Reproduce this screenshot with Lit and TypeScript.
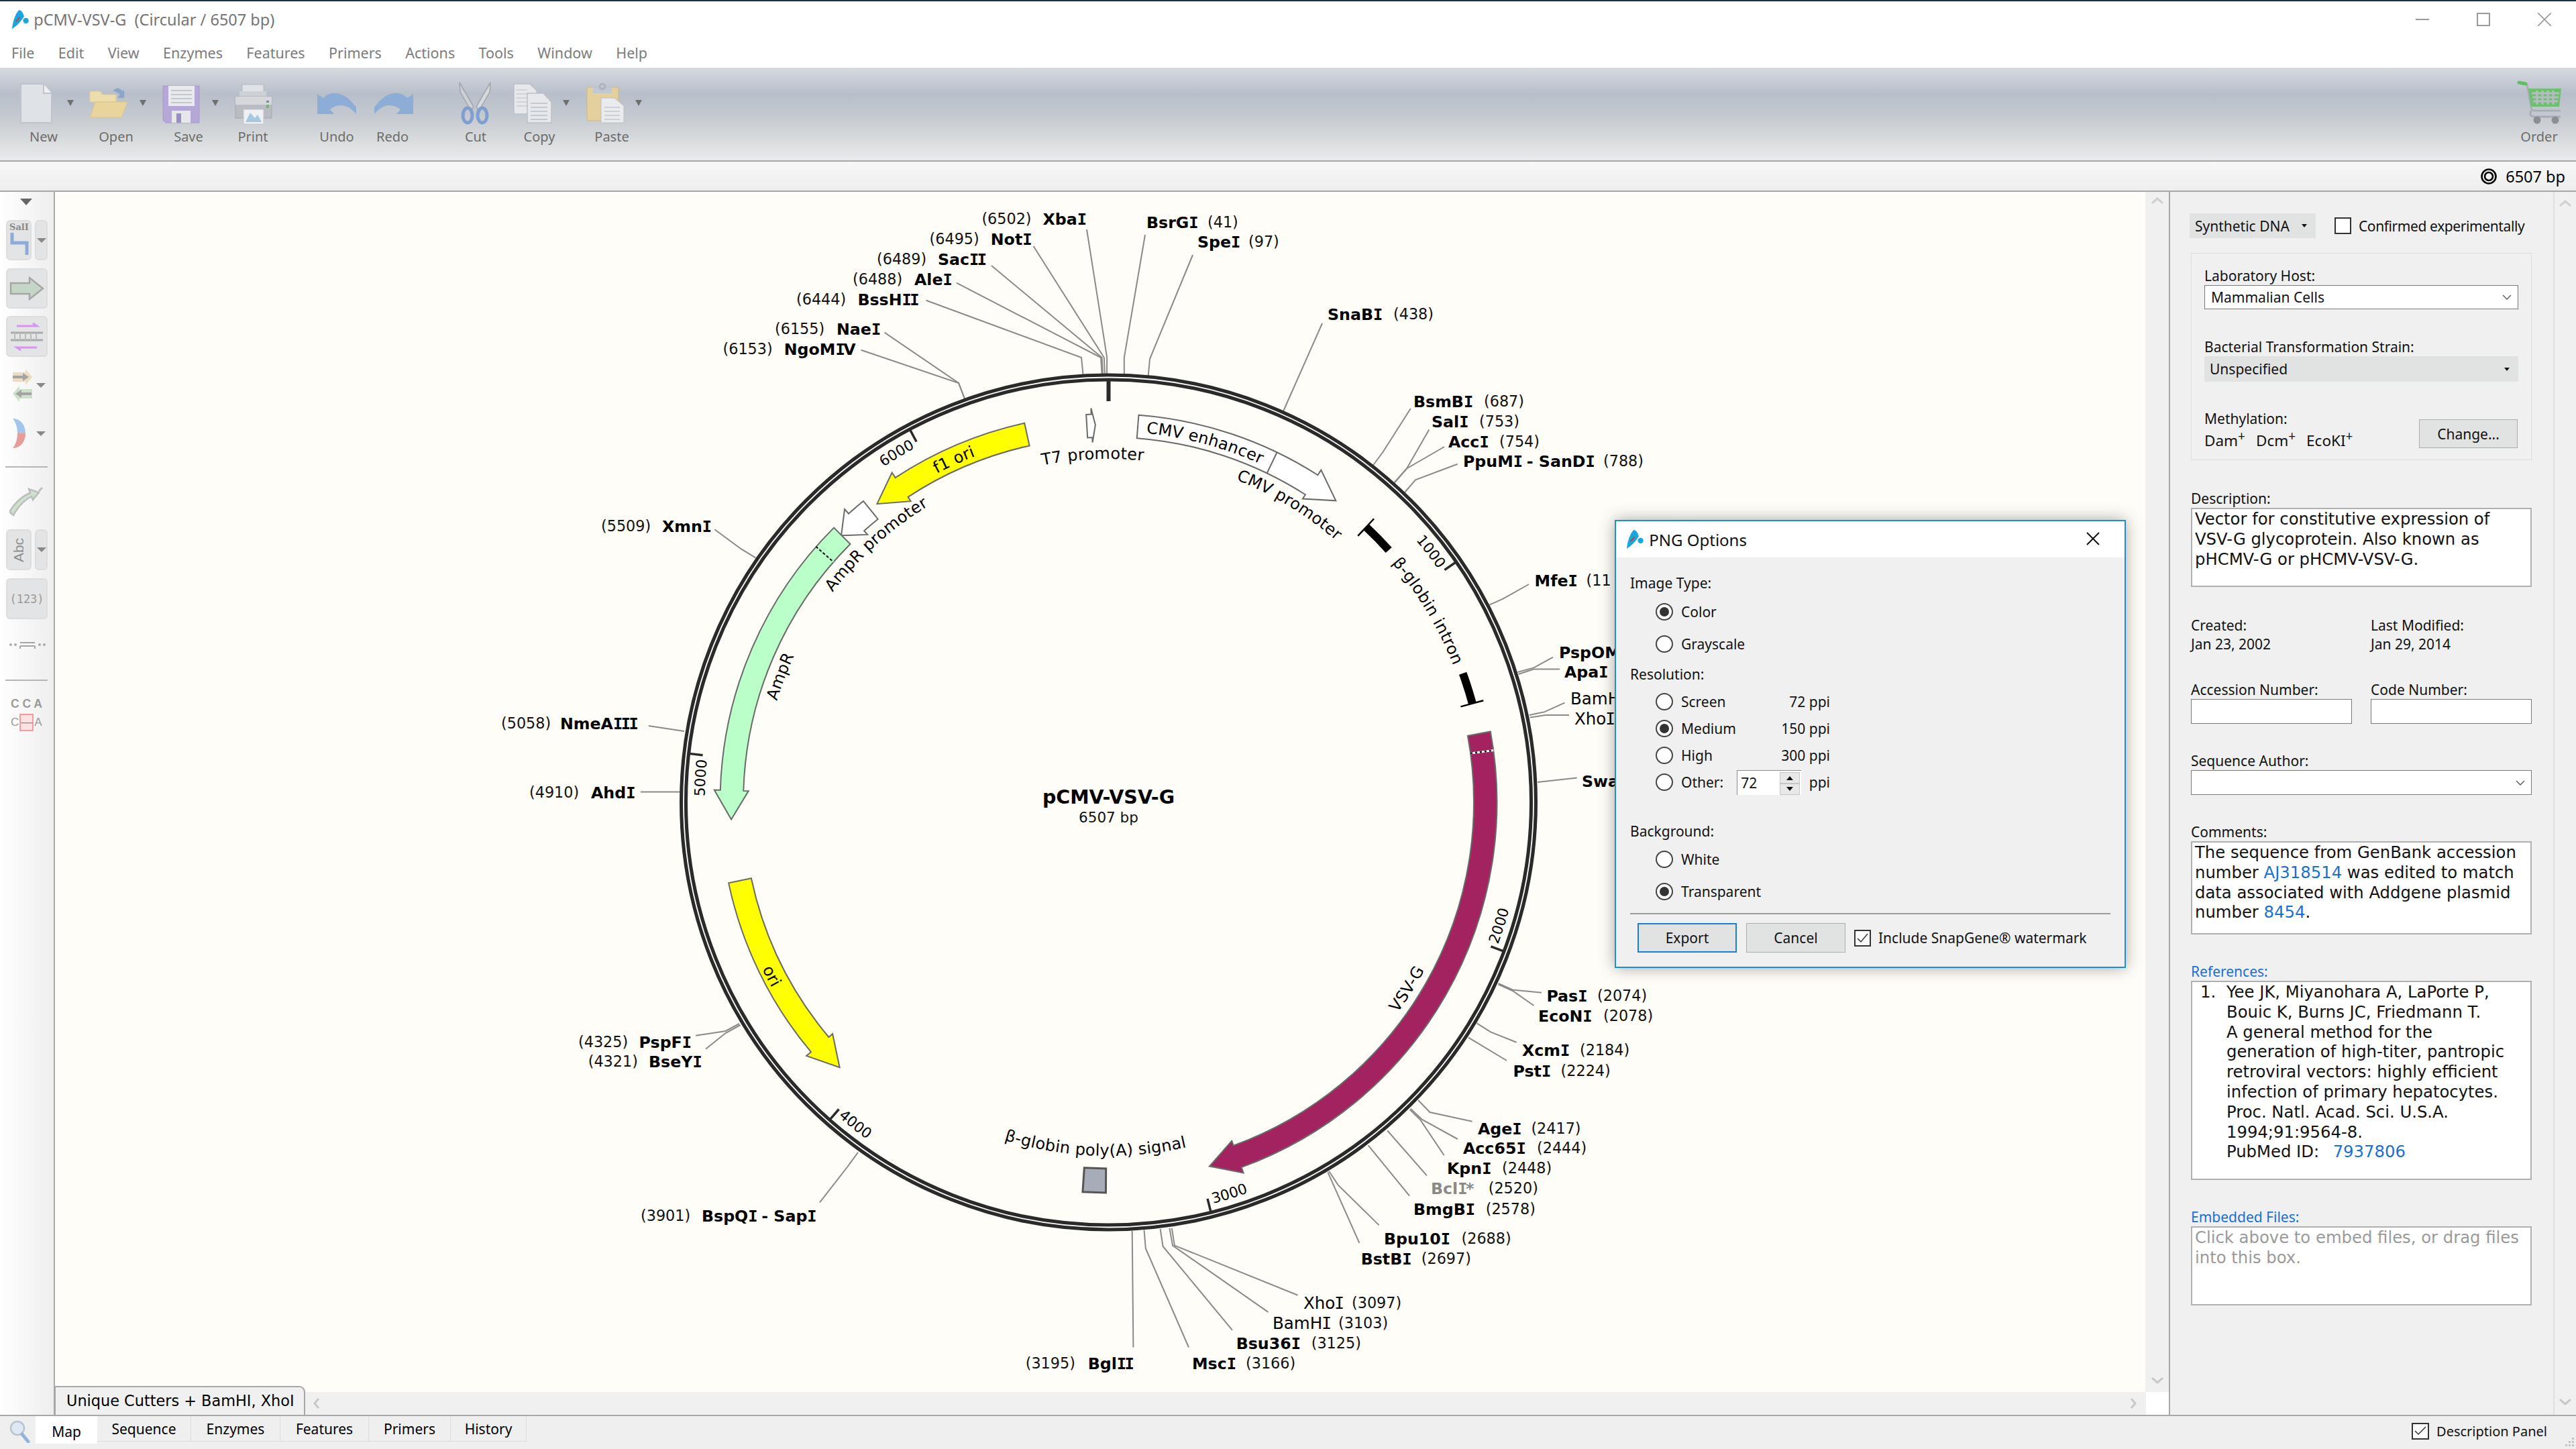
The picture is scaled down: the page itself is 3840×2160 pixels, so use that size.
import { LitElement, html, css, svg } from 'lit';
import { customElement } from 'lit/decorators.js';

// map geometry, page coordinates (the svg viewBox starts at the canvas corner)
const CX = 1652.5;
const CY = 1196;
const pt = (r: number, a: number) => {
  const t = (a * Math.PI) / 180;
  return [+(CX + r * Math.sin(t)).toFixed(2), +(CY - r * Math.cos(t)).toFixed(2)];
};
const arcTo = (r: number, a0: number, a1: number) => {
  const p = pt(r, a1);
  return `A${r} ${r} 0 ${Math.abs(a1 - a0) > 180 ? 1 : 0} ${a1 > a0 ? 1 : 0} ${p[0]} ${p[1]}`;
};

const R0 = 544.5;
const R1 = 579;
function arrowPath(a0: number, base: number, tip: number) {
  const s = pt(R1, a0);
  const h1 = pt(588, base);
  const t = pt(563, tip);
  const h2 = pt(537, base);
  const b = pt(R0, base);
  return `M${s} ${arcTo(R1, a0, base)} L${h1} L${t} L${h2} L${b} ${arcTo(R0, base, a0)} Z`;
}

const features = [
  { fill: '#ffff00', a0: -12.5, base: -33.3, tip: -37.8 },
  { fill: '#ffffff', a0: -39.15, base: -42, tip: -45.05 },
  { fill: '#baffc9', a0: -45, base: -88.2, tip: -92.6 },
  { fill: '#ffffff', a0: 4.45, base: 32.6, tip: 37 },
  { fill: '#a32360', a0: 79.5, base: 160, tip: 164.5 },
  { fill: '#ffff00', a0: -102, base: -130, tip: -134.6 },
];

// label, baseline radius, centre angle, tops pointing to the centre
const curved: [string, number, number, boolean][] = [
  ['f1 ori', 553, -24.3, false],
  ['T7 promoter', 512, -2.6, false],
  ['CMV enhancer', 553, 15, false],
  ['CMV promoter', 517, 31.3, false],
  ['AmpR promoter', 517, -42, false],
  ['AmpR', 517, -69, false],
  ['β-globin intron', 553, 59.1, false],
  ['VSV-G', 533, 122, true],
  ['ori', 573, -117.3, true],
  ['β-globin poly(A) signal', 527, 182.2, true],
];

type Site = [string, string, number, number, number, string, number[]];
// name, position, name x, position x, centre y, weight, leader points
// sites whose position sits wholly behind the dialog have none
const sites: Site[] = [
  ['XbaI', '(6502)', 1554.6, 1463.4, 326, 'b', [1620, 342, 1650.2, 533, 1650, 558]],
  ['NotI', '(6495)', 1476.8, 1385.6, 356, 'b', [1540.6, 367, 1645.8, 533, 1647, 558]],
  ['SacII', '(6489)', 1398, 1307, 386, 'b', [1478, 396, 1642.6, 533, 1644, 558]],
  ['AleI', '(6488)', 1363, 1271, 416, 'b', [1425.8, 421.7, 1641, 533, 1642.6, 558]],
  ['BssHII', '(6444)', 1278.4, 1187, 446, 'b', [1380.5, 447.7, 1612, 533, 1614.5, 558]],
  ['NaeI', '(6155)', 1247, 1155, 490, 'b', [1318.6, 495.7, 1429, 571, 1437.9, 594]],
  ['NgoMIV', '(6153)', 1168.8, 1077.5, 520, 'b', [1283.5, 521.7, 1429, 571, 1437.9, 594]],
  ['BsrGI', '(41)', 1709, 1800, 331, 'b', [1707, 350, 1675.8, 533, 1675.8, 558]],
  ['SpeI', '(97)', 1785, 1861, 360, 'b', [1778, 380, 1714, 535, 1711.7, 560]],
  ['SnaBI', '(438)', 1979, 2077, 468, 'b', [1971, 482, 1913, 613]],
  ['BsmBI', '(687)', 2107, 2212, 598, 'b', [2102.8, 609, 2061.4, 674, 2046.5, 694]],
  ['SalI', '(753)', 2134, 2205, 628, 'b', [2130.3, 640.4, 2097, 698.5, 2078.6, 719.5]],
  ['AccI', '(754)', 2159, 2235, 658, 'b', [2153, 666, 2097, 698.5, 2078.6, 719.5]],
  ['PpuMI - SanDI', '(788)', 2181, 2390, 687, 'b', [2172.8, 691.8, 2110, 715.4, 2094, 734]],
  ['MfeI', '(11', 2287.6, 2364.5, 865, 'b', [2279, 871, 2240.5, 892.7, 2220.4, 901.6]],
  ['PspOMI', '', 2324, 0, 972, 'b', [2315, 979.7, 2286.4, 995.4, 2262.3, 1002]],
  ['ApaI', '', 2332, 0, 1001, 'b', [2325, 997.6, 2286.4, 997.6, 2263.5, 1005]],
  ['BamHI', '', 2341, 0, 1041, 'r', [2332.4, 1047.6, 2302, 1061.4, 2279.6, 1065.9]],
  ['XhoI', '', 2347, 0, 1071, 'r', [2339, 1066, 2303.7, 1066, 2280.7, 1069.5]],
  ['SwaI', '', 2358, 0, 1164, 'b', [2350.7, 1159.6, 2292, 1166]],
  ['PasI', '(2074)', 2305.4, 2381, 1483.6, 'b', [2298, 1479.8, 2254.9, 1475.4, 2233.6, 1466]],
  ['EcoNI', '(2078)', 2293, 2390, 1513.8, 'b', [2286.4, 1499, 2254.9, 1477, 2233.6, 1467.7]],
  ['XcmI', '(2184)', 2269, 2355, 1565, 'b', [2260.6, 1553.8, 2222, 1538.4, 2201.5, 1525.3]],
  ['PstI', '(2224)', 2255.5, 2326.6, 1596, 'b', [2246, 1581, 2188.9, 1546.7]],
  ['AgeI', '(2417)', 2203, 2282.4, 1681.6, 'b', [2194.6, 1671.7, 2131.5, 1658, 2114, 1640]],
  ['Acc65I', '(2444)', 2181, 2291, 1711, 'b', [2172.8, 1698, 2120, 1669, 2102.8, 1652.6]],
  ['KpnI', '(2448)', 2157, 2239, 1741, 'b', [2152.7, 1722.2, 2117, 1669, 2101.6, 1654]],
  ['BclI*', '(2520)', 2133, 2218.7, 1771, 'g', [2126.9, 1752.4, 2068.3, 1685.5]],
  ['BmgBI', '(2578)', 2107, 2214.7, 1801.8, 'b', [2101, 1782.5, 2039.6, 1707.4]],
  ['Bpu10I', '(2688)', 2063, 2178.5, 1845.6, 'b', [2055.7, 1826.4, 1994.8, 1766.6, 1981, 1745.8]],
  ['BstBI', '(2697)', 2028.7, 2118.8, 1875.8, 'b', [2026.4, 1852.8, 1979.3, 1747.4]],
  ['XhoI', '(3097)', 1943, 2015, 1941.6, 'r', [1934.6, 1930.7, 1750.9, 1856.6, 1746.8, 1830.8]],
  ['BamHI', '(3103)', 1897, 1995, 1971.8, 'r', [1890.4, 1955.9, 1748, 1856.6, 1743.4, 1830.8]],
  ['Bsu36I', '(3125)', 1842.7, 1954.7, 2002, 'b', [1837, 1982.8, 1733.6, 1858, 1729.6, 1832]],
  ['MscI', '(3166)', 1777, 1857, 2032, 'b', [1772, 2008.5, 1707.8, 1861, 1705.5, 1833.6]],
  ['BglII', '(3195)', 1621.7, 1528.7, 2032, 'b', [1689.4, 2008.5, 1687.7, 1835]],
  ['XmnI', '(5509)', 987, 896, 784, 'b', [1065.3, 789.2, 1104.6, 818.2, 1126.5, 831.6]],
  ['NmeAIII', '(5058)', 835, 747, 1078, 'b', [967, 1082, 1020, 1090]],
  ['AhdI', '(4910)', 881, 789, 1180.5, 'b', [955, 1180.5, 1013, 1180.5]],
  ['PspFI', '(4325)', 952.6, 862, 1552.7, 'b', [1037.2, 1543.7, 1081.6, 1537, 1102, 1526]],
  ['BseYI', '(4321)', 967, 876.7, 1582, 'b', [1052, 1563.8, 1081.6, 1540, 1103.6, 1528]],
  ['BspQI - SapI', '(3901)', 1046, 955, 1812, 'b', [1222, 1792.4, 1262.8, 1740, 1279, 1717.9]],
];

const scaleTicks = [
  { label: '1000', a: 55.33, inward: false },
  { label: '2000', a: 110.65, inward: true },
  { label: '3000', a: 165.98, inward: true },
  { label: '4000', a: 221.3, inward: true },
  { label: '5000', a: 276.63, inward: false },
  { label: '6000', a: 331.95, inward: false },
];

// the map font has a serifed capital I, which DejaVu Sans lacks; the mono face has one
const nameParts = (name: string, bold: boolean) =>
  name.split(/(I)/).map((part) =>
    part === 'I'
      ? svg`<tspan font-family="'DejaVu Sans Mono', monospace" letter-spacing=${bold ? -2.5 : -3} dx=${bold ? 0 : -1}>I</tspan>`
      : part
  );

const dropArrow = svg`<path d="M75 27h10l-5 9z" fill="#6f6f6f" />`;

const tools = [
  {
    label: 'New', gap: 25, drop: true,
    icon: svg`<path d="M6 3H40L52 17V61H6Z" fill="#dfe3e8" stroke="#bfc4ca" stroke-width="2" /><path d="M40 3V17H52" fill="#eef0f3" stroke="#bfc4ca" stroke-width="2" />`,
  },
  {
    label: 'Open', gap: 28, drop: true,
    icon: svg`<path d="M1 14H16L20 19H40V30H1Z" fill="#ecdcae" stroke="#dccb9c" /><path d="M9 30H57L48 53H1Z" fill="#e9d49c" stroke="#d8c48e" /><path d="M35 14C40 8 46 8 49 14L52 12V24H42L46 19C43 16 39 14 35 14Z" fill="#8ba6c9" />`,
  },
  {
    label: 'Save', gap: 28, drop: true,
    icon: svg`<path d="M2 6H56V61H6L2 57Z" fill="#b5a8d6" stroke="#a698c9" /><rect x="10" y="6" width="39" height="30" fill="#e9eaee" /><path d="M14 13H45M14 19H45M14 25H45M14 31H45" stroke="#b9bcc4" stroke-width="1.5" /><rect x="15" y="43" width="28" height="18" fill="#e6e7ea" /><rect x="22" y="47" width="7" height="14" fill="#9a8fc0" />`,
  },
  {
    label: 'Print', gap: 16, drop: false,
    icon: svg`<rect x="24" y="4" width="32" height="20" fill="#dfe2e7" stroke="#b5b9bf" /><path d="M20 14H60L60 24H20Z" fill="#cdd0d5" /><rect x="14" y="22" width="54" height="32" fill="#b9bcc2" stroke="#a5a8ae" /><rect x="14" y="22" width="54" height="12" fill="#d5d7db" /><rect x="60" y="28" width="4" height="3" fill="#7d8a9a" /><rect x="60" y="34" width="4" height="5" fill="#7fb07f" /><rect x="26" y="41" width="30" height="22" fill="#eef0f3" stroke="#c0c4c9" /><path d="M29 60L36 46L43 54L47 49L53 60Z" fill="#a5c8e0" />`,
  },
  {
    label: 'Undo', gap: 45, drop: false,
    icon: svg`<path d="M11 18L20 24C32 12 52 14 69 38L69 48C56 32 42 32 30 41L36 48H11Z" fill="#8eadd6" />`,
  },
  {
    label: 'Redo', gap: 3, drop: false,
    icon: svg`<path d="M71 18L62 24C50 12 30 14 13 38L13 48C26 32 40 32 52 41L46 48H71Z" fill="#8eadd6" />`,
  },
  {
    label: 'Cut', gap: 44, drop: false,
    icon: svg`<path d="M16 1L37 37L33 43L17 15Z" fill="#cdd1d6" stroke="#a2a6ac" stroke-width="1.5" /><path d="M62 1L41 37L45 43L61 15Z" fill="#d6d9dd" stroke="#a2a6ac" stroke-width="1.5" /><ellipse cx="28" cy="50" rx="7" ry="11" fill="none" stroke="#7f9fd0" stroke-width="5" /><ellipse cx="50" cy="50" rx="7" ry="11" fill="none" stroke="#7f9fd0" stroke-width="5" />`,
  },
  {
    label: 'Copy', gap: 15, drop: true,
    icon: svg`<path d="M2 3H26L36 13V48H2Z" fill="#e6e8ec" stroke="#bcc0c6" stroke-width="1.5" /><path d="M6 12H22M6 18H30M6 24H30M6 30H30M6 36H30" stroke="#c8cbd0" stroke-width="1.5" /><path d="M22 17H46L58 30V61H22Z" fill="#e6e8ec" stroke="#bcc0c6" stroke-width="1.5" /><path d="M27 32H52M27 38H52M27 44H52M27 50H52M27 56H52" stroke="#b4bdcc" stroke-width="1.5" />`,
  },
  {
    label: 'Paste', gap: 28, drop: true,
    icon: svg`<rect x="3" y="8" width="47" height="50" rx="2" fill="#e4d09c" stroke="#cdb988" /><rect x="12" y="8" width="28" height="9" fill="#c1c8d2" /><circle cx="26" cy="7" r="4" fill="none" stroke="#a9b1bc" stroke-width="2.5" /><path d="M24 24H44L58 36V61H24Z" fill="#e9ebef" stroke="#bcc0c6" /><path d="M29 38H52M29 44H52M29 50H52M29 56H52" stroke="#c4c7cc" stroke-width="1.5" />`,
  },
];

const logo = (h: number) => html`<svg class="logo" viewBox="0 0 28 32" height=${h} width=${(h * 28) / 32}>
  <path d="M1 31C2 20 6 7 12 1C16 1 19 6 20 11C17 18 9 26 1 31Z" fill="#19a6e0" />
  <circle cx="23" cy="18" r="4.5" fill="#19a6e0" />
  <path d="M7 19C10 17 12 15 13 12" stroke="#b64a3a" stroke-width="2" fill="none" />
</svg>`;

const chevron = html`<svg class="chev" viewBox="0 0 14 8" width="14" height="8"><path d="M1 1L7 7L13 1" fill="none" stroke="#555" stroke-width="1.3" /></svg>`;

const radio = (on: boolean) => html`<span class="radio ${on ? 'on' : ''}"></span>`;

@customElement('app-root')
export class AppRoot extends LitElement {
  static styles = css`
    :host {
      display: block;
      width: 3840px;
      height: 2160px;
      overflow: hidden;
      background: #f0f0f0;
      font-family: 'Noto Sans', sans-serif;
      font-size: 21px;
      color: #111;
    }
    .title {
      height: 53px;
      border-top: 2px solid #17324f;
      background: #fff;
      display: flex;
      align-items: center;
      padding-left: 17px;
      color: #757575;
      font-size: 23.5px;
      white-space: pre;
    }
    .title .name {
      margin-left: 7px;
    }
    .winbtns {
      margin-left: auto;
      display: flex;
      margin-right: 2px;
    }
    .winbtn {
      width: 91px;
      height: 40px;
      display: flex;
      align-items: center;
      justify-content: center;
    }
    .menu {
      height: 46px;
      background: #fff;
      display: flex;
      gap: 35.4px;
      padding-left: 17px;
      align-items: center;
      color: #7c7c7c;
      font-size: 21.5px;
    }
    .toolbar {
      height: 138px;
      box-sizing: border-box;
      padding-top: 21px;
      display: flex;
      background: linear-gradient(
        180deg,
        #d6dae0 0,
        #c3c9d2 18%,
        #b8bfca 28%,
        #c3c8d0 50%,
        #d4d7da 72%,
        #eaebec 100%
      );
    }
    .tool {
      width: 80px;
      display: flex;
      flex-direction: column;
      align-items: center;
      color: #6c6c6c;
      font-size: 20px;
    }
    .tool svg {
      overflow: visible;
      display: block;
    }
    .tool span {
      line-height: 30px;
      margin-top: 1px;
    }
    .tool.order {
      margin-left: auto;
      margin-right: 15px;
    }
    .strip {
      height: 43px;
      border-top: 2px solid #a8a8a8;
      border-bottom: 2px solid #a8a8a8;
      background: linear-gradient(180deg, #f7f7f7, #eeeeee);
      display: flex;
      align-items: center;
      justify-content: flex-end;
      gap: 13px;
      padding-right: 16px;
      color: #000;
      font-size: 23.5px;
    }
    .main {
      height: 1823px;
      display: flex;
    }
    .rail {
      width: 82px;
      flex: none;
      box-sizing: border-box;
      border-right: 2px solid #a8a8a8;
      background: linear-gradient(90deg, #ffffff, #eeeeee);
      padding: 10px 0 0 9px;
    }
    .rail .tri {
      display: block;
      width: 0;
      height: 0;
      border-left: 7px solid transparent;
      border-right: 7px solid transparent;
      border-top: 7px solid #888;
    }
    .rail .tri.top {
      margin: 0 0 22px 21px;
      border-left-width: 9px;
      border-right-width: 9px;
      border-top: 10px solid #666;
    }
    .rrow {
      display: flex;
      gap: 5px;
      height: 60px;
      margin-bottom: 11px;
    }
    .rrow.first {
      margin-bottom: 12px;
    }
    .rrow.tall {
      height: 61px;
      margin-bottom: 0;
    }
    .rrow.abc-row {
      height: 61px;
      margin-bottom: 12px;
    }
    .rbtn {
      box-sizing: border-box;
      border: 2px solid #dddddd;
      border-radius: 6px;
      background: #e3e4e5;
      display: flex;
      align-items: center;
      justify-content: center;
      position: relative;
      color: #8e8e8e;
    }
    .rbtn.small {
      width: 38px;
    }
    .rbtn.side {
      width: 19px;
    }
    .rbtn.full {
      width: 62px;
    }
    .rbtn.full svg,
    .rbtn.small svg {
      position: absolute;
      left: -2px;
      top: -2px;
    }
    .sali {
      position: absolute;
      top: 1px;
      left: 3px;
      font: bold 13px 'DejaVu Serif', serif;
      color: #888;
    }
    .abc {
      transform: rotate(-90deg);
      font: 21px 'Liberation Sans', sans-serif;
      white-space: nowrap;
    }
    .num {
      font: 17px 'DejaVu Sans Mono', monospace;
      color: #999;
      white-space: nowrap;
    }
    .plain {
      display: flex;
      align-items: center;
      width: 62px;
    }
    .plain .tri {
      margin-left: auto;
      margin-right: 3px;
    }
    .plain svg {
      display: block;
    }
    .p1 {
      margin-top: 18px;
      height: 49px;
    }
    .p1 svg {
      margin-left: 5px;
    }
    .p2 {
      margin-top: 25px;
      height: 44px;
    }
    .rsep {
      width: 63px;
      height: 2px;
      background: #b5b5b5;
      margin: 27px 0 0 -1px;
    }
    .p3 {
      margin-top: 28px;
      height: 45px;
      margin-bottom: 19px;
    }
    .p3 svg {
      margin-left: 5px;
    }
    .p4 {
      margin-top: 27px;
      height: 25px;
    }
    .sep2 {
      margin-top: 38px;
    }
    .cca {
      margin: 24px 0 0 7px;
      font: bold 17.5px 'Liberation Sans', sans-serif;
      color: #999;
      white-space: nowrap;
    }
    .cga {
      margin: 4px 0 0 7px;
      display: flex;
      align-items: center;
      font: 17px 'Liberation Sans', sans-serif;
      color: #999;
    }
    .cga b {
      box-sizing: border-box;
      width: 21px;
      height: 26px;
      margin: 0 1px;
      border: 2px solid #f79aa2;
      background: #fde2e2;
      color: #888;
      font-weight: 400;
      text-align: center;
      line-height: 22px;
    }
    .centre {
      width: 3151px;
      flex: none;
      border-right: 2px solid #a8a8a8;
      box-sizing: content-box;
      margin-right: 0;
    }
    .upper {
      height: 1789px;
      display: flex;
      position: relative;
    }
    .map {
      width: 3116px;
      height: 1789px;
      background: #fffdf7;
      flex: none;
    }
    .map svg {
      display: block;
    }
    .vbar {
      flex: 1;
      display: flex;
      flex-direction: column;
      justify-content: space-between;
      align-items: center;
      padding: 8px 0 12px;
    }
    .lower {
      height: 34px;
      display: flex;
      align-items: center;
      position: relative;
    }
    .sheet {
      box-sizing: border-box;
      width: 374px;
      height: 43px;
      margin-top: -9px;
      margin-left: -1px;
      border: 2px solid #a8a8a8;
      border-bottom: 0;
      border-radius: 0 9px 0 0;
      background: #f0f0f0;
      font: 22.4px 'DejaVu Sans', sans-serif;
      white-space: nowrap;
      padding-left: 16px;
      line-height: 41px;
      flex: none;
      color: #000;
    }
    .lower .l {
      margin-left: 12px;
    }
    .lower .r {
      margin-left: auto;
      margin-right: 48px;
    }
    .lower .cell {
      position: absolute;
      right: 0;
      top: 0;
      width: 34px;
      height: 34px;
      background: #fff;
    }
    .panel {
      width: 571px;
      flex: none;
      box-sizing: border-box;
      padding: 32px 0 0 31px;
      font-size: 21px;
      line-height: 26px;
      color: #111;
    }
    .pscroll {
      flex: 1;
      border-left: 2px solid #e0e0e0;
      display: flex;
      flex-direction: column;
      justify-content: space-between;
      align-items: center;
      padding: 12px 0 14px;
    }
    .typerow {
      display: flex;
      align-items: center;
      height: 37px;
      margin-left: -2px;
      white-space: nowrap;
    }
    .typerow .conf {
      letter-spacing: -0.4px;
    }
    .flatsel {
      background: #e1e3e3;
      display: flex;
      align-items: center;
      justify-content: space-between;
      box-sizing: border-box;
      padding: 0 13px 0 8px;
    }
    .flatsel i {
      width: 0;
      height: 0;
      border-left: 4px solid transparent;
      border-right: 4px solid transparent;
      border-top: 5px solid #111;
    }
    .check {
      box-sizing: border-box;
      width: 25px;
      height: 25px;
      border: 2px solid #333;
      background: #fff;
      flex: none;
      display: inline-flex;
      align-items: center;
      justify-content: center;
    }
    .group {
      box-sizing: border-box;
      width: 508px;
      height: 309px;
      margin-top: 22px;
      border: 1.5px solid #dcdcdc;
      padding: 20px 0 0 19px;
    }
    .lb {
      height: 27px;
      line-height: 27px;
      white-space: nowrap;
    }
    .field {
      box-sizing: border-box;
      background: #fff;
      border: 1.5px solid #7a7a7a;
      display: flex;
      align-items: center;
      height: 37px;
    }
    .field.sel {
      justify-content: space-between;
      padding: 0 9px;
    }
    .methyl {
      display: flex;
      justify-content: space-between;
      margin-top: 42px;
      width: 467px;
    }
    .methyl .vals {
      display: flex;
      gap: 16px;
      margin-top: 4px;
      white-space: nowrap;
      line-height: 30px;
      font-size: 22.5px;
    }
    .methyl sup {
      font-size: 19px;
      line-height: 0;
    }
    .btn {
      box-sizing: border-box;
      border: 1.5px solid #adadad;
      background: #e1e3e3;
      display: flex;
      align-items: center;
      justify-content: center;
    }
    .change {
      width: 147px;
      height: 43px;
      margin-top: 14px;
    }
    .box {
      box-sizing: border-box;
      width: 508px;
      background: #fff;
      border: 2.5px solid #b0b0b0;
      font: 24.3px/29.8px 'DejaVu Sans', sans-serif;
      color: #111;
      padding: 0 0 0 4px;
      white-space: nowrap;
    }
    .gap {
      margin-top: 42px;
    }
    .two {
      display: grid;
      grid-template-columns: 268px 240px;
    }
    .link {
      color: #1a6fd4;
    }
    .refs {
      display: flex;
      height: 297px;
      padding-left: 12px;
    }
    .refs > span:first-child {
      width: 39px;
    }
    .pubmed {
      margin-left: 5px;
    }
    .empty {
      color: #9a9a9a;
      height: 118px;
    }
    .dialog {
      position: absolute;
      left: 2325px;
      top: 489px;
      box-sizing: border-box;
      width: 762px;
      height: 668px;
      border: 2px solid #1b8ede;
      background: #f0f0f0;
      box-shadow: 0 0 22px rgba(0, 0, 0, 0.35);
      font-size: 21px;
      color: #111;
    }
    .dtitle {
      height: 54px;
      background: #fff;
      display: flex;
      align-items: center;
      padding-left: 15px;
      font-size: 24px;
      gap: 8px;
      position: relative;
    }
    .dtitle svg.x {
      position: absolute;
      right: 37px;
      top: 16px;
    }
    .dbody {
      padding: 23px 0 0 21px;
    }
    .dl {
      height: 30px;
      line-height: 30px;
    }
    .opt {
      display: flex;
      align-items: center;
      margin-left: 38px;
      width: 260px;
      white-space: nowrap;
    }
    .opt.tall {
      height: 48px;
    }
    .opt.mid {
      height: 40px;
    }
    .radio {
      box-sizing: border-box;
      width: 26px;
      height: 26px;
      border: 2px solid #444;
      border-radius: 50%;
      background: #fff;
      margin-right: 12px;
      flex: none;
      position: relative;
    }
    .radio.on::after {
      content: '';
      position: absolute;
      inset: 4px;
      border-radius: 50%;
      background: #333;
    }
    .opt .val {
      margin-left: auto;
    }
    .opt .other {
      width: 84.5px;
    }
    .spin {
      box-sizing: border-box;
      width: 97px;
      height: 37px;
      display: flex;
      background: #fff;
      border-left: 1.5px solid #8a8a8a;
      border-top: 1.5px solid #8a8a8a;
      padding-left: 5px;
      line-height: 36px;
      position: relative;
    }
    .spin .up,
    .spin .dn {
      position: absolute;
      right: 2px;
      width: 30px;
      height: 17px;
      background: #e8e8e8;
      border: 1px solid #c6c6c6;
      box-sizing: border-box;
      display: flex;
      align-items: center;
      justify-content: center;
    }
    .spin .up {
      top: 2px;
    }
    .spin .dn {
      top: 19px;
    }
    .dsep {
      height: 2px;
      width: 716px;
      margin-top: 8px;
      background: #9b9b9b;
    }
    .dact {
      display: flex;
      align-items: center;
      margin: 13px 0 0 11px;
      white-space: nowrap;
    }
    .dact .btn {
      width: 148px;
      height: 44px;
      margin-right: 14px;
    }
    .dact .btn.def {
      border: 2px solid #1b7fd6;
    }
    .dact .check {
      margin-right: 11px;
      margin-left: -1px;
    }
    .bottom {
      height: 51px;
      box-sizing: border-box;
      border-top: 2px solid #a8a8a8;
      display: flex;
      background: #efefef;
      position: relative;
    }
    .lens {
      width: 53px;
      flex: none;
      padding: 6px 0 0 13px;
      box-sizing: border-box;
    }
    .tabs {
      display: flex;
      height: 37px;
      border-bottom: 1.5px solid #dcdcdc;
      font-size: 21px;
      color: #000;
    }
    .tab {
      border-right: 1.5px solid #dcdcdc;
      display: flex;
      align-items: center;
      justify-content: center;
      box-sizing: border-box;
    }
    .tab.on {
      background: #fff;
      height: 41px;
      padding-top: 5px;
      border-right: 0;
    }
    .panelcheck {
      margin-left: auto;
      margin-right: 43px;
      display: flex;
      align-items: center;
      gap: 11px;
      height: 44px;
      color: #111;
      font-size: 20px;
    }
    .panelcheck .check {
      width: 26px;
      height: 25px;
    }
    .grip {
      position: absolute;
      right: 2px;
      bottom: 2px;
    }
  `;

  private renderRail() {
    return html`<div class="rail">
      <i class="tri top"></i>
      <div class="rrow first">
        <div class="rbtn small">
          <span class="sali">SalI</span>
          <svg width="38" height="60" viewBox="0 0 38 60"><path d="M9 19V34H31V52" fill="none" stroke="#8fa9d8" stroke-width="5" /></svg>
        </div>
        <div class="rbtn side"><i class="tri"></i></div>
      </div>
      <div class="rrow">
        <div class="rbtn full">
          <svg width="62" height="60" viewBox="0 0 62 60"><path d="M7 22H35V14L55 30L35 46V38H7Z" fill="#c4d6c6" stroke="#a6a6a6" stroke-width="2.5" /></svg>
        </div>
      </div>
      <div class="rrow tall">
        <div class="rbtn full">
          <svg width="62" height="61" viewBox="0 0 62 61"><path d="M16 15H46L40 11M46 47H16L22 51" fill="none" stroke="#d795ee" stroke-width="3" /><path d="M7 25H55M7 36H55" stroke="#aaa" stroke-width="3" /><path d="M13 25V36M21 25V36M29 25V36M37 25V36M45 25V36" stroke="#bbb" stroke-width="2" /></svg>
        </div>
      </div>
      <div class="plain p1">
        <svg width="34" height="49" viewBox="0 0 34 49"><path d="M5 5H24V0L34 12L24 24V19H5Z" fill="#ecdcc3" /><path d="M5 12H26" stroke="#a4a4a4" stroke-width="4" /><path d="M29 12L20 6V18Z" fill="#a4a4a4" /><path d="M34 30H15V25L5 37L15 49V44H34Z" fill="#cfe0cf" /><path d="M14 37H33" stroke="#a4a4a4" stroke-width="4" /><path d="M9 37L18 31V43Z" fill="#a4a4a4" /></svg>
        <i class="tri"></i>
      </div>
      <div class="plain p2">
        <svg width="36" height="44" viewBox="0 0 36 44"><path d="M10 0C22 0 29 10 29 22H17C17 14 15 6 10 0Z" fill="#a3c6ea" /><path d="M29 22C29 34 22 44 10 44C15 38 17 30 17 22Z" fill="#e89c9c" /></svg>
        <i class="tri"></i>
      </div>
      <div class="rsep"></div>
      <div class="plain p3">
        <svg width="50" height="45" viewBox="3 0 50 45"><path d="M3 38C10 26 22 14 34 10L32 4L47 9L38 20L36 15C26 20 16 30 9 43Z" fill="#cfe0cf" stroke="#bdbdbd" stroke-width="2.5" /><path d="M47 7L52 2" stroke="#bdbdbd" stroke-width="3" /></svg>
      </div>
      <div class="rrow abc-row">
        <div class="rbtn small"><span class="abc">Abc</span></div>
        <div class="rbtn side"><i class="tri"></i></div>
      </div>
      <div class="rrow tall">
        <div class="rbtn full"><span class="num">(123)</span></div>
      </div>
      <div class="plain p4">
        <svg width="62" height="25" viewBox="0 0 62 25"><circle cx="7" cy="11" r="2" fill="#aaa" /><circle cx="14" cy="11" r="2" fill="#aaa" /><path d="M21 8H43M21 13H43M21 13V17M43 13V17" stroke="#a5a5a5" stroke-width="2" fill="none" /><circle cx="50" cy="11" r="2" fill="#aaa" /><circle cx="57" cy="11" r="2" fill="#aaa" /></svg>
      </div>
      <div class="rsep sep2"></div>
      <div class="cca">C C A</div>
      <div class="cga"><span>C</span><b>—</b><span>A</span></div>
    </div>`;
  }

  private renderMap() {
    const r = 633.5;
    const ring = svg`<circle cx=${CX} cy=${CY} r=${r} fill="none" stroke="#2a2a2a" stroke-width="12" />
      <circle cx=${CX} cy=${CY} r=${r} fill="none" stroke="#ffffff" stroke-width="1.8" />`;
    const line = (r0: number, r1: number, a: number, w: number, c = '#000') => {
      const p = pt(r0, a);
      const q = pt(r1, a);
      return svg`<line x1=${p[0]} y1=${p[1]} x2=${q[0]} y2=${q[1]} stroke=${c} stroke-width=${w} />`;
    };
    const band = (a0: number, a1: number) =>
      svg`<path d="M${pt(562, a0)} ${arcTo(562, a0, a1)}" fill="none" stroke="#000" stroke-width="12" />`;
    const box = [pt(546, 180.4), pt(582, 180.4), pt(582, 183.8), pt(546, 183.8)].join(' ');
    return html`<svg width="3116" height="1789" viewBox="82 286 3116 1789" font-family="'DejaVu Sans', sans-serif">
      <defs>
        ${curved.map(([, rad, a, inward], i) => {
          const [s, e] = inward ? [a + 80, a - 80] : [a - 80, a + 80];
          return svg`<path id="lab${i}" d="M${pt(rad, s)} ${arcTo(rad, s, e)}" />`;
        })}
        ${scaleTicks.map((t, i) => {
          const rad = t.inward ? 618 : 602;
          const [s, e] = t.inward ? [t.a - 0.6, t.a - 60] : [t.a - 60, t.a - 0.6];
          return svg`<path id="tick${i}" d="M${pt(rad, s)} ${arcTo(rad, s, e)}" />`;
        })}
      </defs>
      ${sites.map(
        (s) => svg`<polyline points=${s[6].join(' ')} fill="none" stroke="#8a8a8a" stroke-width="2" />`
      )}
      ${ring}
      ${line(598, 629, 0, 6, '#2a2a2a')}
      ${scaleTicks.map(
        (t, i) => svg`${line(609, 629, t.a, 3.5, '#2a2a2a')}
          <text font-size="21.5" text-anchor=${t.inward ? 'start' : 'end'}>
            <textPath href="#tick${i}" startOffset=${t.inward ? '0%' : '100%'}>${t.label}</textPath>
          </text>`
      )}
      ${features.map(
        (f) => svg`<path d=${arrowPath(f.a0, f.base, f.tip)} fill=${f.fill} stroke="#6a6a6a" stroke-width="2" />`
      )}
      <path d=${`M${pt(R1, -3.3)} L${pt(R1, -2.55)} L${pt(588, -2.55)} L${pt(563, -2)} L${pt(537, -2.55)} L${pt(R0, -2.55)} L${pt(R0, -3.3)} Z`} fill="#fff" stroke="#6a6a6a" stroke-width="2" />
      ${line(R0, R1, 25.7, 2, '#6a6a6a')}
      ${line(R0, R1, -48.85, 2, '#000')}
      <path d=${`M${pt(R0, -48.85)} L${pt(R1, -48.85)}`} stroke="#baffc9" stroke-width="2.4" stroke-dasharray="3 4" />
      ${line(R0, R1, 82.3, 3, '#fff')}
      <path d=${`M${pt(R0, 82.3)} L${pt(R1, 82.3)}`} stroke="#222" stroke-width="3" stroke-dasharray="3 4" />
      ${band(43.1, 48)} ${band(70, 74.8)}
      ${line(544, 579, 43.1, 2.5)} ${line(544, 579, 74.8, 2.5)}
      <polygon points=${box} fill="#a7adb8" stroke="#555" stroke-width="3" />
      ${curved.map(
        ([label], i) => svg`<text font-size="24" letter-spacing="0.25" text-anchor="middle" fill="#000"><textPath href="#lab${i}" startOffset="50%">${label}</textPath></text>`
      )}
      ${sites.map(
        (s) => svg`<text x=${s[2]} y=${s[4] + 9} font-size=${s[5] === 'r' ? 24.5 : 23.7} font-weight=${s[5] === 'r' ? 400 : 700} fill=${s[5] === 'g' ? '#8a8a8a' : '#000'}>${nameParts(s[0], s[5] !== 'r')}</text>
          ${s[1] ? svg`<text x=${s[3]} y=${s[4] + 8} font-size="22.3" fill="#111">${s[1]}</text>` : ''}`
      )}
      <text x=${CX} y="1198" font-size="28.5" font-weight="700" text-anchor="middle" fill="#000">pCMV-VSV-G</text>
      <text x=${CX} y="1226" font-size="21.5" text-anchor="middle" fill="#111">6507 bp</text>
    </svg>`;
  }

  private renderDialog() {
    return html`<div class="dialog">
      <div class="dtitle">
        ${logo(30)}<span>PNG Options</span>
        <svg class="x" width="20" height="20" viewBox="0 0 20 20"><path d="M1 1L19 19M19 1L1 19" stroke="#111" stroke-width="2" /></svg>
      </div>
      <div class="dbody">
        <div class="dl">Image Type:</div>
        <div class="opt tall" style="margin-top:4px">${radio(true)}Color</div>
        <div class="opt tall">${radio(false)}Grayscale</div>
        <div class="dl" style="margin-top:6px">Resolution:</div>
        <div class="opt mid" style="margin-top:6px">${radio(false)}Screen<span class="val">72 ppi</span></div>
        <div class="opt mid">${radio(true)}Medium<span class="val">150 ppi</span></div>
        <div class="opt mid">${radio(false)}High<span class="val">300 ppi</span></div>
        <div class="opt mid">
          ${radio(false)}<span class="other">Other:</span>
          <div class="spin">
            72
            <span class="up"><svg width="12" height="7" viewBox="0 0 12 7"><path d="M1 7L6 1L11 7Z" fill="#111" /></svg></span>
            <span class="dn"><svg width="12" height="7" viewBox="0 0 12 7"><path d="M1 0L6 6L11 0Z" fill="#111" /></svg></span>
          </div>
          <span style="margin-left:12px">ppi</span>
        </div>
        <div class="dl" style="margin-top:38px">Background:</div>
        <div class="opt tall" style="margin-top:3px">${radio(false)}White</div>
        <div class="opt tall">${radio(true)}Transparent</div>
        <div class="dsep"></div>
        <div class="dact">
          <div class="btn def">Export</div>
          <div class="btn">Cancel</div>
          <span class="check"><svg width="17" height="15" viewBox="0 0 17 15"><path d="M1 8L6 13L16 1" fill="none" stroke="#333" stroke-width="1.5" /></svg></span>
          Include SnapGene® watermark
        </div>
      </div>
    </div>`;
  }

  private renderPanel() {
    return html`<div class="panel">
      <div class="typerow">
        <div class="flatsel" style="width:188px;height:37px">Synthetic DNA<i></i></div>
        <span class="check" style="margin:0 11px 0 28px"></span><span class="conf">Confirmed experimentally</span>
      </div>
      <div class="group">
        <div class="lb">Laboratory Host:</div>
        <div class="field sel" style="width:468px;height:36px">Mammalian Cells ${chevron}</div>
        <div class="lb" style="margin-top:43px">Bacterial Transformation Strain:</div>
        <div class="flatsel" style="width:468px;height:38px">Unspecified<i></i></div>
        <div class="methyl">
          <div>
            <div class="lb">Methylation:</div>
            <div class="vals"><span>Dam<sup>+</sup></span><span>Dcm<sup>+</sup></span><span>EcoKI<sup>+</sup></span></div>
          </div>
          <div class="btn change">Change...</div>
        </div>
      </div>
      <div class="lb" style="margin-top:44px">Description:</div>
      <div class="box" style="height:118px">Vector for constitutive expression of<br />VSV-G glycoprotein. Also known as<br />pHCMV-G or pHCMV-VSV-G.</div>
      <div class="two" style="margin-top:43px;line-height:28px">
        <div>Created:<br />Jan 23, 2002</div>
        <div>Last Modified:<br />Jan 29, 2014</div>
      </div>
      <div class="two" style="margin-top:41px">
        <div><div class="lb">Accession Number:</div><div class="field" style="width:240px"></div></div>
        <div><div class="lb">Code Number:</div><div class="field" style="width:240px"></div></div>
      </div>
      <div class="lb gap">Sequence Author:</div>
      <div class="field sel" style="width:508px;justify-content:flex-end">${chevron}</div>
      <div class="lb gap">Comments:</div>
      <div class="box" style="height:139px">The sequence from GenBank accession<br />number <span class="link">AJ318514</span> was edited to match<br />data associated with Addgene plasmid<br />number <span class="link">8454</span>.</div>
      <div class="lb gap link">References:</div>
      <div class="box refs">
        <span>1.</span>
        <span>Yee JK, Miyanohara A, LaPorte P,<br />Bouic K, Burns JC, Friedmann T.<br />A general method for the<br />generation of high-titer, pantropic<br />retroviral vectors: highly efficient<br />infection of primary hepatocytes.<br />Proc. Natl. Acad. Sci. U.S.A.<br />1994;91:9564-8.<br />PubMed ID:&nbsp; <span class="link pubmed">7937806</span></span>
      </div>
      <div class="lb gap link">Embedded Files:</div>
      <div class="box empty">Click above to embed files, or drag files<br />into this box.</div>
    </div>`;
  }

  render() {
    const scrollUp = html`<svg width="18" height="10" viewBox="0 0 18 10"><path d="M1 9L9 2L17 9" fill="none" stroke="#d0d0d0" stroke-width="3" /></svg>`;
    const scrollDown = html`<svg width="18" height="10" viewBox="0 0 18 10"><path d="M1 1L9 8L17 1" fill="none" stroke="#c8c8c8" stroke-width="3" /></svg>`;
    return html`
      <div class="title">
        ${logo(30)}<span class="name">pCMV-VSV-G  (Circular / 6507 bp)</span>
        <div class="winbtns">
          <div class="winbtn"><svg width="20" height="20" viewBox="0 0 20 20"><path d="M0 10H20" stroke="#999" stroke-width="2" /></svg></div>
          <div class="winbtn"><svg width="20" height="20" viewBox="0 0 20 20"><rect x="1" y="1" width="18" height="18" fill="none" stroke="#999" stroke-width="2" /></svg></div>
          <div class="winbtn"><svg width="20" height="20" viewBox="0 0 20 20"><path d="M0 0L20 20M20 0L0 20" stroke="#999" stroke-width="1.6" /></svg></div>
        </div>
      </div>
      <div class="menu">
        ${['File', 'Edit', 'View', 'Enzymes', 'Features', 'Primers', 'Actions', 'Tools', 'Window', 'Help'].map((m) => html`<span>${m}</span>`)}
      </div>
      <div class="toolbar">
        ${tools.map(
          (t) => html`<div class="tool" style="margin-left:${t.gap}px">
            <svg width="80" height="66" viewBox="0 0 80 66">${t.icon}${t.drop ? dropArrow : ''}</svg>
            <span>${t.label}</span>
          </div>`
        )}
        <div class="tool order">
          <svg width="80" height="66" viewBox="0 0 80 66">
            <path d="M10 2L22 4L28 38C28 42 30 43 34 43H72" fill="none" stroke="#a8acb2" stroke-width="2.5" />
            <path d="M10 1L20 3" stroke="#5fbf62" stroke-width="5" stroke-linecap="round" />
            <path d="M24 10H73L70 37H28Z" fill="#6cc070" />
            <path d="M29 17H70M30 23H69M31 29H68M37 13V34M45 13V34M53 13V34M61 13V34" stroke="#b6bcc2" stroke-width="3" />
            <path d="M28 43C25 50 28 52 34 52H72" fill="none" stroke="#a8acb2" stroke-width="3" />
            <circle cx="37" cy="57" r="5.5" fill="#8a8f92" /><circle cx="64" cy="57" r="5.5" fill="#8a8f92" />
          </svg>
          <span>Order</span>
        </div>
      </div>
      <div class="strip">
        <svg width="24" height="24" viewBox="0 0 24 24"><circle cx="12" cy="12" r="10.5" fill="none" stroke="#000" stroke-width="2.6" /><circle cx="12" cy="12" r="6" fill="none" stroke="#000" stroke-width="2.6" /></svg>
        <span>6507 bp</span>
      </div>
      <div class="main">
        ${this.renderRail()}
        <div class="centre">
          <div class="upper">
            <div class="map">${this.renderMap()}</div>
            <div class="vbar">${scrollUp}${scrollDown}</div>
            ${this.renderDialog()}
          </div>
          <div class="lower">
            <div class="sheet">Unique Cutters + BamHI, XhoI</div>
            <svg class="l" width="10" height="18" viewBox="0 0 10 18"><path d="M8 2L2 9L8 16" fill="none" stroke="#c8c8c8" stroke-width="3" /></svg>
            <svg class="r" width="10" height="18" viewBox="0 0 10 18"><path d="M2 2L8 9L2 16" fill="none" stroke="#c8c8c8" stroke-width="3" /></svg>
            <div class="cell"></div>
          </div>
        </div>
        ${this.renderPanel()}
        <div class="pscroll">${scrollUp}${scrollDown}</div>
      </div>
      <div class="bottom">
        <div class="lens">
          <svg width="32" height="34" viewBox="0 0 32 34"><circle cx="13" cy="12" r="10" fill="#dfe9f5" stroke="#b9c4d2" stroke-width="2.5" /><path d="M20 21L29 32" stroke="#8fb4dc" stroke-width="5" stroke-linecap="round" /></svg>
        </div>
        <div class="tabs">
          ${[['Map', 92], ['Sequence', 140], ['Enzymes', 133], ['Features', 132], ['Primers', 122], ['History', 113]].map(
            ([t, w], i) => html`<div class="tab ${i === 0 ? 'on' : ''}" style="width:${w}px">${t}</div>`
          )}
        </div>
        <div class="panelcheck">
          <span class="check"><svg width="18" height="14" viewBox="0 0 18 14"><path d="M1 7L6 12L17 1" fill="none" stroke="#333" stroke-width="1.5" /></svg></span>
          Description Panel
        </div>
        <svg class="grip" width="16" height="16" viewBox="0 0 16 16"><path d="M12 1h3v3h-3zM7 6h3v3H7zM12 6h3v3h-3zM2 11h3v3H2zM7 11h3v3H7zM12 11h3v3h-3z" fill="#c4c4c4" /></svg>
      </div>
    `;
  }
}
